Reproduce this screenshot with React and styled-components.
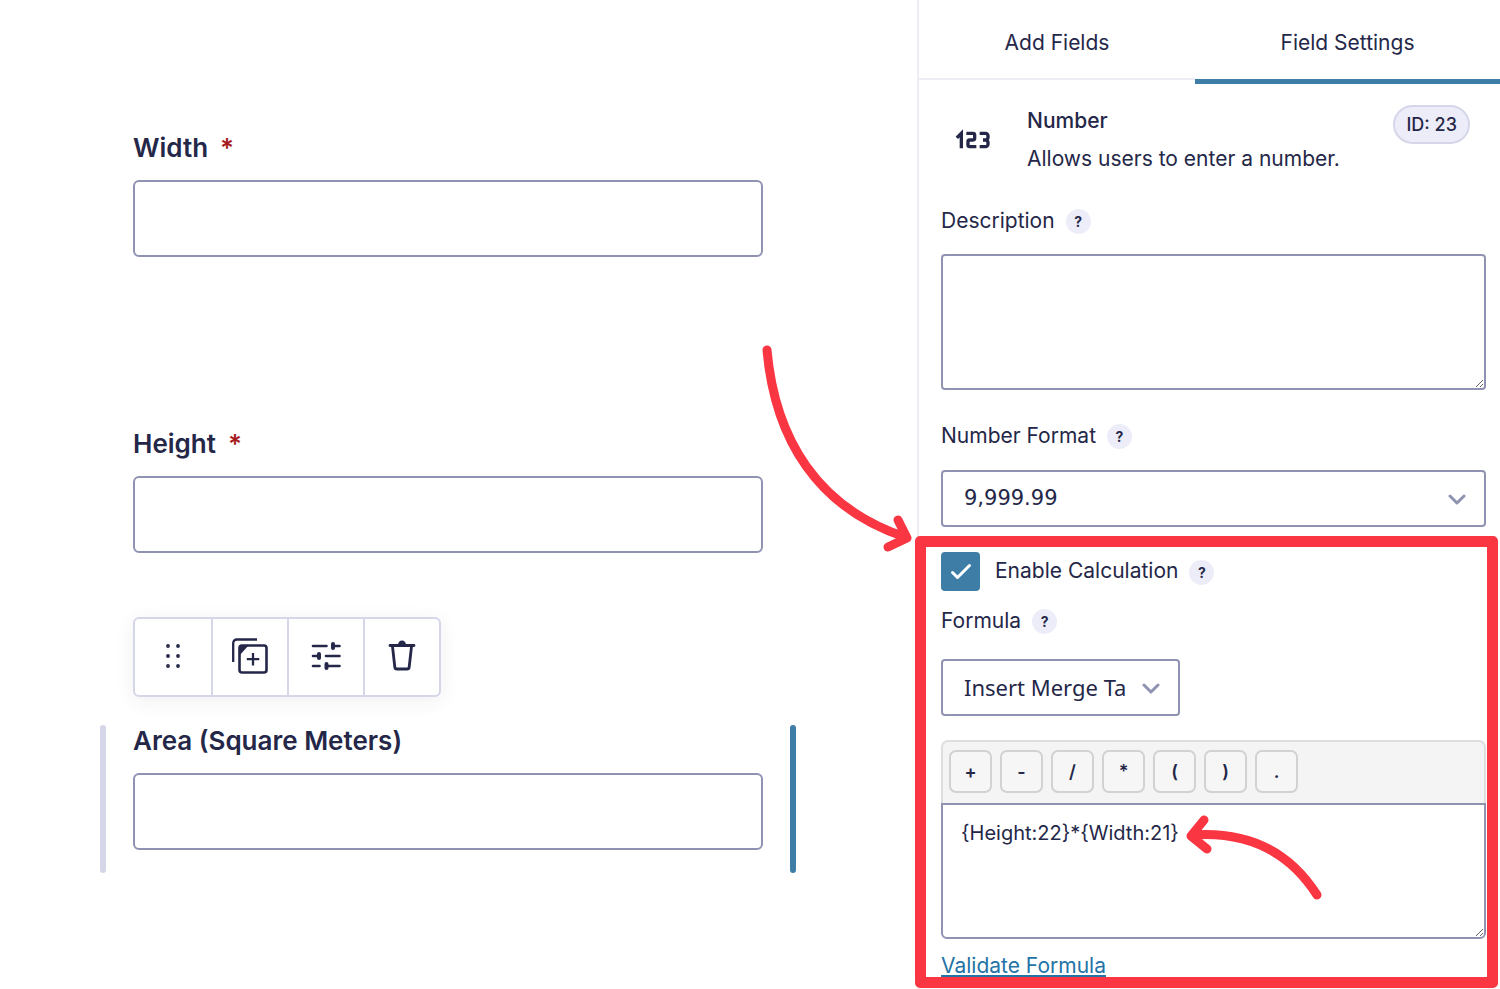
import React from "react";
import styled, { createGlobalStyle } from "styled-components";
import { TbNumber123 } from "react-icons/tb";

const ink = "#242748";
const outline = "#9092b2";
const hairline = "#d5d7e9";
const lilac = "#ecedf8";
const blue = "#3e7da6";
const red = "#f93642";

const GlobalStyle = createGlobalStyle`
  *, *::before, *::after { box-sizing: border-box; }
  body {
    margin: 0;
    background: #fff;
    color: ${ink};
    font-family: Inter, "Liberation Sans", sans-serif;
    font-size: 21px;
    line-height: 28px;
  }
  button, input, textarea, select { font: inherit; color: inherit; }
`;

const Page = styled.div`
  display: flex;
  min-height: 100vh;
  overflow: hidden;
`;

/* ---------- form canvas ---------- */

const Canvas = styled.main`
  flex: 1;
  min-width: 0;
  padding: 132px 121px 0 100px;
`;

const FieldRow = styled.div`
  display: flex;
  gap: 27px;
  height: ${(p) => (p.$selected ? 148 : 296)}px;
`;

const EdgeBar = styled.span`
  flex: 0 0 6px;
  border-radius: 3px;
  background: ${(p) => p.$color || "transparent"};
`;

const Field = styled.div`
  flex: 1;
  min-width: 0;
`;

const FieldLabel = styled.label`
  display: block;
  font-size: 26px;
  line-height: 32px;
  font-weight: 600;
`;

const Required = styled.span`
  margin-left: 12px;
  color: #a51c1f;
`;

const FieldInput = styled.input`
  display: block;
  width: 100%;
  height: 77px;
  margin-top: 16px;
  padding: 0 20px;
  border: 2px solid ${outline};
  border-radius: 6px;
  background: #fff;
`;

const SelectedGroup = styled.div`
  margin-top: -107px;
`;

const FieldToolbar = styled.div`
  display: inline-flex;
  margin: 0 0 28px 33px;
  border: 2px solid ${hairline};
  border-radius: 6px;
  background: #fff;
  box-shadow: 0 4px 20px rgba(36, 39, 72, 0.07);
`;

const ToolButton = styled.button`
  display: flex;
  align-items: center;
  justify-content: center;
  width: 76px;
  height: 76px;
  padding: 0 0 2px;
  border: 0;
  background: none;
  & + & { border-left: 2px solid ${hairline}; }
`;

/* ---------- settings sidebar ---------- */

const Sidebar = styled.aside`
  flex: 0 0 583px;
  border-left: 2px solid #ededf4;
`;

const Tabs = styled.nav`
  display: flex;
  height: 84px;
`;

const Tab = styled.button`
  flex: 1 1 auto;
  height: ${(p) => (p.$active ? 84 : 80)}px;
  padding: ${(p) => (p.$active ? 7 : 8)}px 0 0;
  border: 0;
  border-bottom: ${(p) => (p.$active ? `5px solid ${blue}` : "2px solid #ededf4")};
  background: none;
`;

const Panel = styled.div`
  padding: 21px 14px 0 22px;
`;

const TypeHeader = styled.header`
  display: flex;
  align-items: flex-start;
`;

const TypeIcon = styled.span`
  display: flex;
  justify-content: center;
  width: 64px;
  margin: 15px 22px 0 0;
  svg { width: 40px; height: 40px; stroke-linecap: square; stroke-linejoin: miter; }
`;

const TypeText = styled.div`
  flex: 1;
`;

const TypeName = styled.h2`
  margin: 2px 0 10px;
  font-size: 21px;
  line-height: 28px;
  font-weight: 500;
`;

const TypeNote = styled.p`
  margin: 0;
`;

const IdBadge = styled.span`
  height: 39px;
  margin-right: 16px;
  padding: 0 11px;
  border: 2px solid ${hairline};
  border-radius: 20px;
  background: ${lilac};
  font-size: 18px;
  line-height: 35px;
  font-weight: 500;
`;

const SettingHead = styled.div`
  display: flex;
  align-items: center;
  gap: 11px;
  margin-top: ${(p) => p.$top}px;
`;

const Help = styled.button`
  width: 25px;
  height: 25px;
  margin-top: 1px;
  padding: 0;
  border: 0;
  border-radius: 50%;
  background: ${lilac};
  font-size: 14px;
  line-height: 25px;
  font-weight: 700;
`;

const TextBox = styled.textarea`
  display: block;
  width: 100%;
  height: 136px;
  margin: ${(p) => (p.$attached ? 0 : 19)}px 0 0;
  padding: 14px 18px;
  border: 2px solid ${outline};
  border-radius: ${(p) => (p.$attached ? "0 0 6px 6px" : "4px")};
  background: #fff;
  font-size: 20px;
  outline: none;
`;

const SelectWrap = styled.div`
  position: relative;
  width: ${(p) => p.$width};
  margin-top: ${(p) => p.$top}px;
  svg {
    position: absolute;
    right: 20px;
    top: 24px;
    pointer-events: none;
  }
`;

const Select = styled.select`
  appearance: none;
  display: block;
  width: 100%;
  height: 57px;
  padding: 0 48px 2px 21px;
  border: 2px solid ${outline};
  border-radius: 4px;
  background: #fff;
  font-family: ${(p) => (p.$numeric ? '"DejaVu Sans"' : '"Noto Sans"')}, sans-serif;
  font-size: ${(p) => (p.$numeric ? 21 : 22)}px;
`;

const Calculation = styled.section`
  position: relative;
  margin-top: 25px;
`;

const CheckHead = styled.div`
  display: flex;
  align-items: center;
  label { margin: -2px 11px 0 15px; }
`;

const Check = styled.span`
  display: grid;
  width: 39px;
  height: 39px;
  > * { grid-area: 1 / 1; place-self: center; }
  svg { pointer-events: none; }
`;

const CheckInput = styled.input`
  appearance: none;
  width: 39px;
  height: 39px;
  margin: 0;
  border-radius: 4px;
  background: ${blue};
`;

const Operators = styled.div`
  display: flex;
  gap: 8px;
  height: 63px;
  margin-top: 24px;
  padding: 8px 6px;
  border: 2px solid #dedede;
  border-bottom: 0;
  border-radius: 7px 7px 0 0;
  background: #f4f4f4;
`;

const Operator = styled.button`
  width: 43px;
  height: 43px;
  padding: 0;
  border: 2px solid #d2d2d4;
  border-radius: 7px;
  background: #f6f6f6;
  font-size: 18px;
  font-weight: 600;
`;

const ValidateLink = styled.a`
  display: inline-block;
  margin-top: 13px;
  color: #2373a6;
`;

const Highlight = styled.div`
  position: absolute;
  inset: -16px -12px -8px -26px;
  border: 11px solid ${red};
  border-radius: 5px;
  pointer-events: none;
`;

const Arrow = styled.svg`
  position: absolute;
  left: ${(p) => p.$left}px;
  top: ${(p) => p.$top}px;
  fill: none;
  stroke: ${red};
  stroke-width: 9px;
  stroke-linecap: round;
  stroke-linejoin: round;
  pointer-events: none;
`;

const Chevron = () => (
  <svg width="18" height="12" viewBox="0 0 18 12" fill="none" stroke={outline} strokeWidth="3" strokeLinecap="round" strokeLinejoin="round" aria-hidden="true">
    <path d="M2 2l7 7 7-7" />
  </svg>
);

const DragIcon = () => (
  <svg width="36" height="36" viewBox="0 0 36 36" fill={ink} aria-hidden="true">
    {[8, 18, 28].map((y) => (
      <React.Fragment key={y}>
        <circle cx="13" cy={y} r="1.9" />
        <circle cx="23" cy={y} r="1.9" />
      </React.Fragment>
    ))}
  </svg>
);

const DuplicateIcon = () => (
  <svg width="36" height="36" viewBox="1 0 36 36" fill="none" stroke={ink} strokeWidth="2.300" aria-hidden="true">
    <path d="M2.200 24V5.500Q2.200 1.500 6 1.500H26" />
    <rect x="8.500" y="7.500" width="27" height="27" rx="2.500" strokeWidth="2.600" />
    <path d="M8 7.500H17.500L8 18z" fill={ink} stroke="none" />
    <path d="M22 15v12.500M15.800 21.200h12.500" />
  </svg>
);

const SlidersIcon = () => (
  <svg width="36" height="36" viewBox="0 0 36 36" fill="none" stroke={ink} strokeWidth="2.600" strokeLinecap="round" aria-hidden="true">
    <path d="M5 8h13.500M27 8h4.500M5 18h4M18 18h13.500M5 28h6.500M20 28h11.500" />
    <path d="M25 6v4M11 16v4M18.500 26v4" strokeWidth="4" />
  </svg>
);

const TrashIcon = () => (
  <svg width="36" height="36" viewBox="0 0 36 36" fill="none" stroke={ink} strokeWidth="2.800" strokeLinecap="round" strokeLinejoin="round" aria-hidden="true">
    <path d="M6 7.500h24M8.500 8.500l2.300 20.500Q11 31 13 31h10Q25 31 25.200 29L27.500 8.500" />
    <path d="M14 7a4 4.500 0 0 1 8 0z" fill={ink} stroke="none" />
  </svg>
);

const HelpTip = ({ topic }) => (
  <Help type="button" aria-label={`Help: ${topic}`}>?</Help>
);

const operators = ["+", "-", "/", "*", "(", ")", "."];

export default function App() {
  return (
    <>
      <GlobalStyle />
      <Page>
        <Canvas>
          {["Width", "Height"].map((name) => (
            <FieldRow key={name}>
              <EdgeBar />
              <Field>
                <FieldLabel htmlFor={name}>
                  {name}
                  <Required>*</Required>
                </FieldLabel>
                <FieldInput id={name} />
              </Field>
              <EdgeBar />
            </FieldRow>
          ))}
          <SelectedGroup>
            <FieldToolbar>
              <ToolButton type="button" aria-label="Move"><DragIcon /></ToolButton>
              <ToolButton type="button" aria-label="Duplicate"><DuplicateIcon /></ToolButton>
              <ToolButton type="button" aria-label="Settings"><SlidersIcon /></ToolButton>
              <ToolButton type="button" aria-label="Delete"><TrashIcon /></ToolButton>
            </FieldToolbar>
            <FieldRow $selected>
              <EdgeBar $color={hairline} />
              <Field>
                <FieldLabel htmlFor="area">Area (Square Meters)</FieldLabel>
                <FieldInput id="area" />
              </Field>
              <EdgeBar $color={blue} />
            </FieldRow>
          </SelectedGroup>
        </Canvas>

        <Sidebar>
          <Tabs>
            <Tab type="button">Add Fields</Tab>
            <Tab type="button" $active>Field Settings</Tab>
          </Tabs>
          <Panel>
            <TypeHeader>
              <TypeIcon><TbNumber123 aria-hidden="true" /></TypeIcon>
              <TypeText>
                <TypeName>Number</TypeName>
                <TypeNote>Allows users to enter a number.</TypeNote>
              </TypeText>
              <IdBadge>ID: 23</IdBadge>
            </TypeHeader>

            <SettingHead $top={34}>
              <label htmlFor="description">Description</label>
              <HelpTip topic="Description" />
            </SettingHead>
            <TextBox id="description" />

            <SettingHead $top={32}>
              <label htmlFor="format">Number Format</label>
              <HelpTip topic="Number Format" />
            </SettingHead>
            <SelectWrap $width="100%" $top={20}>
              <Select id="format" $numeric><option>9,999.99</option></Select>
              <Chevron />
            </SelectWrap>

            <Calculation>
              <CheckHead>
                <Check>
                  <CheckInput type="checkbox" id="calc" defaultChecked />
                  <svg width="22" height="18" viewBox="0 0 22 18" fill="none" stroke="#fff" strokeWidth="3" strokeLinecap="round" strokeLinejoin="round" aria-hidden="true">
                    <path d="M2.500 9.500l5 5L19.500 2.500" />
                  </svg>
                </Check>
                <label htmlFor="calc">Enable Calculation</label>
                <HelpTip topic="Enable Calculation" />
              </CheckHead>
              <SettingHead $top={16}>
                <label htmlFor="formula">Formula</label>
                <HelpTip topic="Formula" />
              </SettingHead>
              <SelectWrap $width="239px" $top={24}>
                <Select aria-label="Merge tag"><option>Insert Merge Ta</option></Select>
                <Chevron />
              </SelectWrap>
              <Operators>
                {operators.map((op) => (
                  <Operator type="button" key={op}>{op}</Operator>
                ))}
              </Operators>
              <TextBox id="formula" $attached defaultValue="{Height:22}*{Width:21}" />
              <ValidateLink href="#validate">Validate Formula</ValidateLink>
              <Highlight />
              <Arrow $left={-181} $top={-212} width="160" height="220" viewBox="760 340 160 220" aria-hidden="true">
                <path d="M767 350C775 440 818 508 905 537M898 520L907 538L888 547" />
              </Arrow>
              <Arrow $left={239} $top={258} width="150" height="100" viewBox="1180 810 150 100" aria-hidden="true">
                <path d="M1317 895Q1275 829 1192 835M1204 820L1191 836L1207 849" />
              </Arrow>
            </Calculation>
          </Panel>
        </Sidebar>
      </Page>
    </>
  );
}
